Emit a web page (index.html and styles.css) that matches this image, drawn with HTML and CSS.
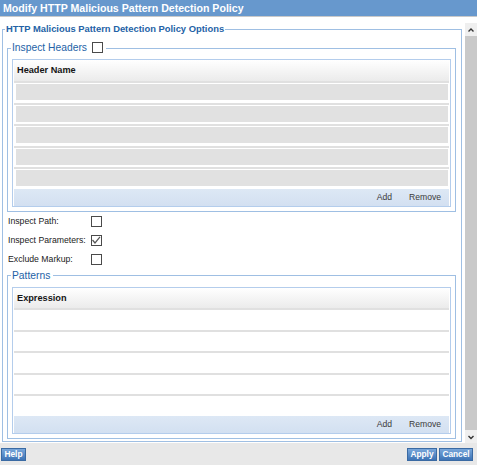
FILE: index.html
```html
<!DOCTYPE html>
<html>
<head>
<meta charset="utf-8">
<link rel="stylesheet" href="styles.css">
</head>
<body>
<div class="dialog">
  <div class="titlebar">Modify HTTP Malicious Pattern Detection Policy</div>
  <div class="main">
    <div class="content">
      <fieldset class="group outer">
        <legend class="outer-legend">HTTP Malicious Pattern Detection Policy Options</legend>
        <fieldset class="group sub">
          <legend class="sub-legend">Inspect Headers <span class="cb legend-cb"></span></legend>
          <div class="grid">
            <div class="grid-head head-h">Header Name</div>
            <div class="grid-row shaded"><div class="cell"></div></div>
            <div class="grid-row shaded"><div class="cell"></div></div>
            <div class="grid-row shaded"><div class="cell"></div></div>
            <div class="grid-row shaded"><div class="cell"></div></div>
            <div class="grid-row shaded"><div class="cell"></div></div>
            <div class="grid-foot"><span>Add</span><span>Remove</span></div>
          </div>
        </fieldset>
        <div class="opts">
          <div class="opt"><span class="opt-label">Inspect Path:</span><span class="cb"></span></div>
          <div class="opt"><span class="opt-label">Inspect Parameters:</span><span class="cb"><svg width="11" height="11" viewBox="0 0 11 11"><polyline points="1.5,5 4,8 9,1.8" fill="none" stroke="#555" stroke-width="1.2"/></svg></span></div>
          <div class="opt"><span class="opt-label">Exclude Markup:</span><span class="cb"></span></div>
        </div>
        <fieldset class="group sub patterns">
          <legend class="sub-legend">Patterns</legend>
          <div class="grid">
            <div class="grid-head head-p">Expression</div>
            <div class="grid-row plain"></div>
            <div class="grid-row plain"></div>
            <div class="grid-row plain"></div>
            <div class="grid-row plain"></div>
            <div class="grid-row plain"></div>
            <div class="grid-foot"><span>Add</span><span>Remove</span></div>
          </div>
        </fieldset>
      </fieldset>
    </div>
    <div class="scrollbar">
      <div class="sb-btn"><svg width="12" height="13" viewBox="0 0 12 13"><polyline points="3.5,8.5 6,6 8.5,8.5" fill="none" stroke="#333" stroke-width="1.4"/></svg></div>
      <div class="sb-btn"><svg width="12" height="13" viewBox="0 0 12 13"><polyline points="3.5,6 6,8.5 8.5,6" fill="none" stroke="#333" stroke-width="1.4"/></svg></div>
    </div>
  </div>
  <div class="buttonbar">
    <span class="btn btn-help">Help</span>
    <span class="spacer"></span>
    <span class="btn btn-apply">Apply</span>
    <span class="btn btn-cancel">Cancel</span>
  </div>
</div>
</body>
</html>
```
FILE: styles.css
```css
* { box-sizing: border-box; }
html, body { margin: 0; padding: 0; }
body {
  width: 477px;
  height: 465px;
  overflow: hidden;
  background: #fff;
  font-family: "Liberation Sans", Arial, sans-serif;
  color: #222;
}
.dialog { display: flex; flex-direction: column; height: 465px; }
.titlebar {
  height: 17px;
  background: #6798cd;
  border-bottom: 1px solid #c9c9c9;
  color: #fff;
  font-weight: bold;
  font-size: 10.6px;
  line-height: 16px;
  padding-left: 3px;
  white-space: nowrap;
}
.main { display: flex; height: 426px; }
.content { width: 465px; overflow: hidden; padding-top: 6px; }
.scrollbar {
  width: 12px;
  margin-top: 6px;
  background: #c9c9c9;
  display: flex;
  flex-direction: column;
  justify-content: space-between;
}
.sb-btn { height: 13px; background: #efefef; display: flex; }

.group { border: 1px solid #9fbfe3; margin: 0; min-width: 0; }
.outer { margin-left: 2px; width: 460px; padding: 7px 5px 2px 4px; }
.outer-legend {
  font-weight: bold;
  font-size: 9.4px;
  line-height: 12px;
  color: #2462a6;
  padding: 0 1px;
  margin-left: -2px;
  white-space: nowrap;
}
.sub { padding: 5px 4px 4px 4px; }
.sub-legend {
  font-size: 10.3px;
  line-height: 12px;
  color: #2462a6;
  padding: 0 3px 0 1px;
  margin-left: -1px;
  white-space: nowrap;
}
.cb {
  display: inline-block;
  width: 11px;
  height: 11px;
  border: 1px solid #4a4a4a;
  background: #fff;
  vertical-align: middle;
  position: relative;
}
.cb svg { display: block; margin: -1px 0 0 -1px; }
.legend-cb { margin-left: 2px; margin-top: -2px; }

.grid { border: 1px solid #b4cdec; padding: 0 1px; }
.grid-head {
  background: linear-gradient(#ffffff, #ebebeb);
  font-weight: bold;
  font-size: 9.2px;
  color: #151515;
  padding-left: 3px;
}
.head-h { height: 21px; line-height: 21px; }
.head-p { height: 20px; line-height: 20px; }
.grid-row { height: 21.6px; border-top: 2px solid #e0e0e0; }
.shaded { padding: 1px 1px 2.6px 1.5px; }
.cell { height: 100%; background: #e1e1e1; }
.grid-foot {
  height: 17px;
  background: linear-gradient(#dde8f5, #d3e0f1);
  display: flex;
  justify-content: flex-end;
  gap: 17px;
  padding-right: 8px;
  font-size: 8.6px;
  line-height: 17px;
  color: #3a3a3a;
}

.opts { padding-left: 1px; }
.opt { height: 19px; display: flex; align-items: center; }
.opt-label { width: 83px; font-size: 8.7px; color: #222; white-space: nowrap; }
.patterns { margin-top: 1px; }

.buttonbar {
  height: 22px;
  background: #e8e8e8;
  display: flex;
  align-items: flex-start;
  padding: 5px 4px 0 1px;
  gap: 2px;
}
.spacer { flex: 1; }
.btn {
  height: 13px;
  border: 1px solid #3a6aa3;
  background: linear-gradient(#78a6da, #3d74b6);
  color: #fff;
  font-weight: bold;
  font-size: 8.3px;
  line-height: 11px;
  text-align: center;
}
.btn-help { width: 25px; }
.btn-apply { width: 30px; }
.btn-cancel { width: 34px; }
```
